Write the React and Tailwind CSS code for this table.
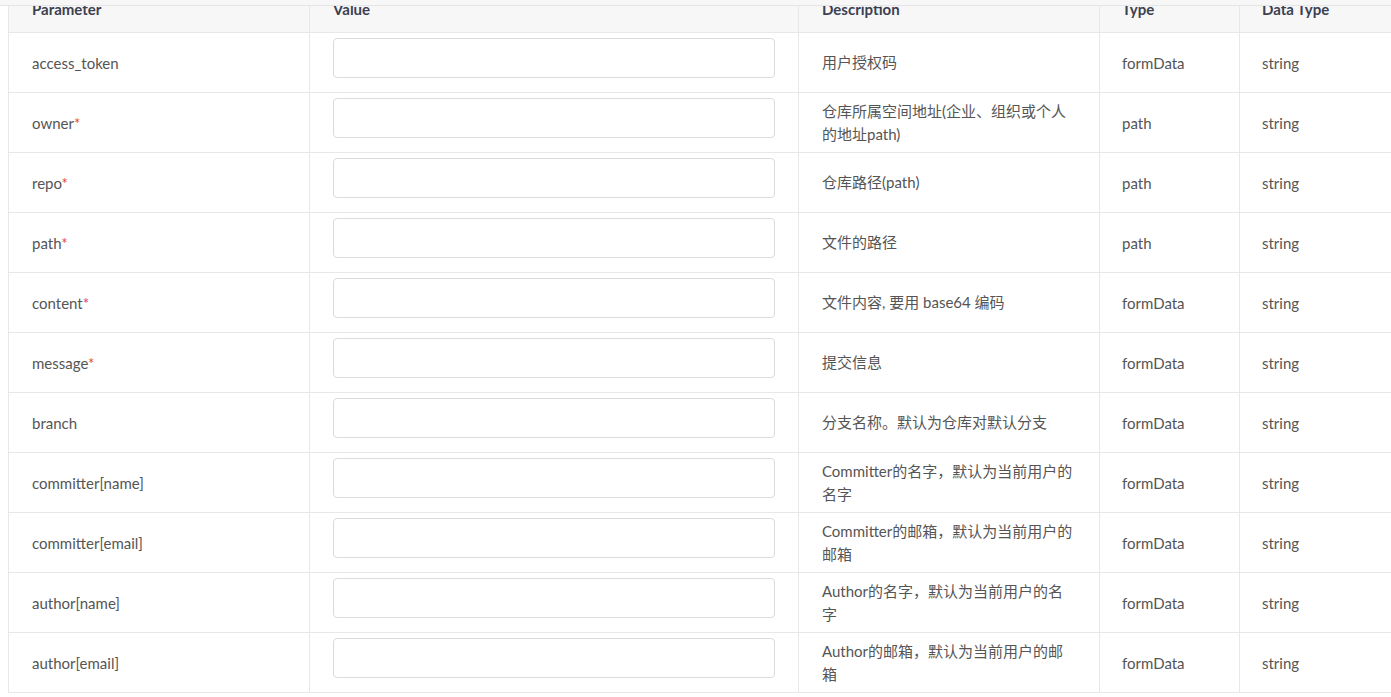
import React from "react";

const rows = [
  ["access_token", false, ["用户授权码"], "formData"],
  ["owner", true, ["仓库所属空间地址(企业、组织或个人", "的地址path)"], "path"],
  ["repo", true, ["仓库路径(path)"], "path"],
  ["path", true, ["文件的路径"], "path"],
  ["content", true, ["文件内容, 要用 base64 编码"], "formData"],
  ["message", true, ["提交信息"], "formData"],
  ["branch", false, ["分支名称。默认为仓库对默认分支"], "formData"],
  ["committer[name]", false, ["Committer的名字，默认为当前用户的", "名字"], "formData"],
  ["committer[email]", false, ["Committer的邮箱，默认为当前用户的", "邮箱"], "formData"],
  ["author[name]", false, ["Author的名字，默认为当前用户的名", "字"], "formData"],
  ["author[email]", false, ["Author的邮箱，默认为当前用户的邮", "箱"], "formData"],
];

const grid = "grid grid-cols-[301px_489px_301px_140px_200px]";
const cell = "border-r border-[#e8e8e8] flex items-center";
const hcell = "border-r border-[#e8e8e8] flex items-center pb-[3px]";
const bcell = "border-r border-[#e8e8e8] flex items-center pt-[2px]";

export default function App() {
  return (
    <div
      className="w-[1391px] h-[697px] overflow-hidden bg-white text-[15px] text-[#555]"
      style={{ fontFamily: 'Lato, "Noto Sans CJK SC", sans-serif' }}
    >
      <div className="h-[6px] bg-[#f7f7f7] border-b border-[#e5e5e5]" />
      <div className="overflow-hidden">
        <div className="ml-[8px] w-[1431px] border-l border-[#e8e8e8] mt-[-16px]">
          <div className={`${grid} h-[43px] bg-[#f7f7f7] border-b border-[#e8e8e8] font-bold text-[#3b4151]`}>
            <div className={`${hcell} pl-[23px]`}>Parameter</div>
            <div className={`${hcell} pl-[23px]`}>Value</div>
            <div className={`${hcell} pl-[23px]`}>Description</div>
            <div className={`${hcell} pl-[22px]`}>Type</div>
            <div className={`${hcell} pl-[22px]`}>Data Type</div>
          </div>
          {rows.map(([name, req, desc, type]) => (
            <div key={name} className={`${grid} h-[60px] border-b border-[#e8e8e8]`}>
              <div className={`${bcell} pl-[23px]`}>
                <span>
                  {name}
                  {req && <span className="text-[#e0443e]">*</span>}
                </span>
              </div>
              <div className="border-r border-[#e8e8e8] px-[23px] pt-[5px]">
                <input
                  type="text"
                  className="block w-full h-[40px] rounded-[4px] border border-[#dcdcdc] bg-white outline-none"
                />
              </div>
              <div className={`${cell} pl-[23px]`}>
                <div className="leading-[23px]">
                  {desc.map((l, i) => (
                    <div key={i} className="whitespace-nowrap">{l}</div>
                  ))}
                </div>
              </div>
              <div className={`${bcell} pl-[22px]`}>{type}</div>
              <div className={`${bcell} pl-[22px]`}>string</div>
            </div>
          ))}
        </div>
      </div>
    </div>
  );
}
